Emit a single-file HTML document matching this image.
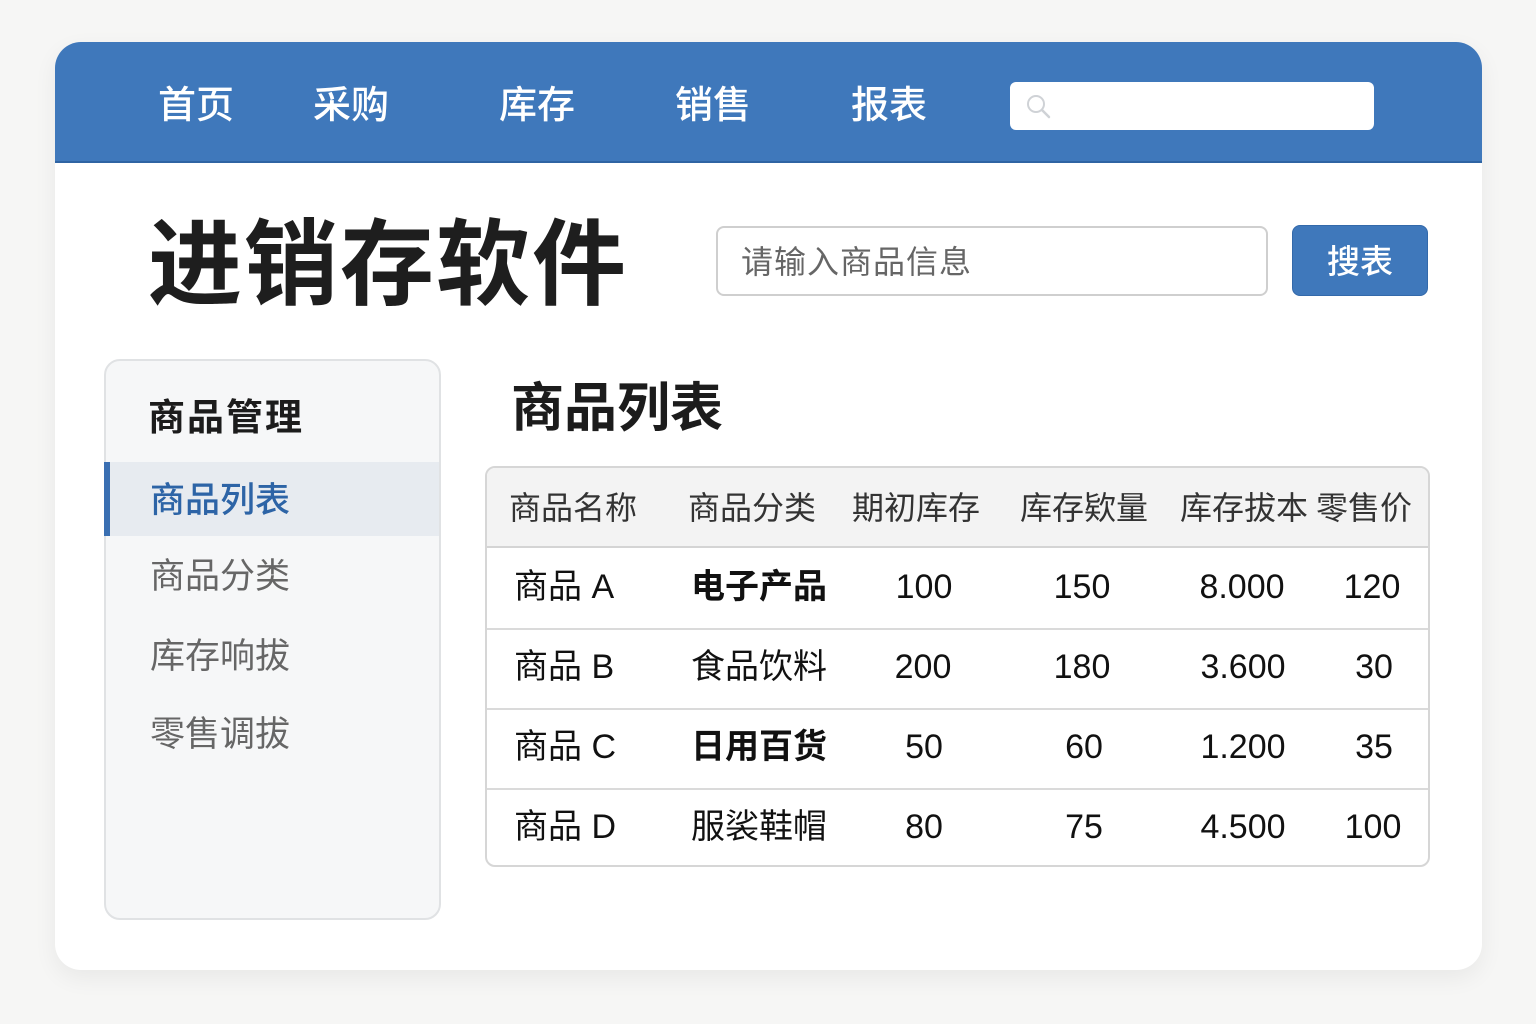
<!DOCTYPE html>
<html><head><meta charset="utf-8">
<style>
*{margin:0;padding:0;box-sizing:border-box}
body{width:1536px;height:1024px;background:#f6f6f5;position:relative;overflow:hidden;font-family:"Liberation Sans","Noto Sans CJK SC",sans-serif;}
.a{position:absolute;white-space:nowrap;line-height:1}
#card{position:absolute;left:55px;top:42px;width:1427px;height:928px;background:#fff;border-radius:26px;box-shadow:0 8px 24px rgba(0,0,0,0.06);overflow:hidden}
#nav{position:absolute;left:0;top:0;width:1427px;height:121px;background:#3f78bb;border-bottom:2px solid #2f64a3}
.nv{color:#fff;font-size:38px;font-weight:500;top:45px}
#ns{position:absolute;left:955px;top:40px;width:364px;height:48px;background:#fff;border-radius:6px}
.sb{position:absolute;background:#f6f7f8;border:2px solid #e0e2e4;border-radius:16px}
.tb{position:absolute;left:430px;top:424px;width:945px;height:401px;border:2px solid #d6d6d6;border-radius:10px;overflow:hidden;background:#fff}
.th{position:absolute;left:0;top:0;width:100%;height:80px;background:#f3f3f3;border-bottom:2px solid #d4d4d4}
.rl{position:absolute;left:0;width:100%;height:2px;background:#dadada}
.h{font-size:32px;color:#333;top:24px}
.d{font-size:34px;color:#111}
.c{transform:translateX(-50%)}
</style></head><body>
<div id="card">
  <div id="nav">
    <div class="a nv" style="left:103px">首页</div>
    <div class="a nv" style="left:258px">采购</div>
    <div class="a nv" style="left:444px">库存</div>
    <div class="a nv" style="left:620px">销售</div>
    <div class="a nv" style="left:796px">报表</div>
    <div id="ns"><svg width="30" height="30" style="position:absolute;left:14px;top:10px" viewBox="0 0 30 30"><circle cx="12" cy="12" r="8" fill="none" stroke="#cfd2d6" stroke-width="2"/><line x1="18" y1="18" x2="25" y2="25" stroke="#cfd2d6" stroke-width="2.5" stroke-linecap="round"/></svg></div>
  </div>
  <div class="a" style="left:93px;top:176px;font-size:94px;font-weight:700;color:#1e1e1e;letter-spacing:2px">进销存软件</div>
  <div style="position:absolute;left:661px;top:184px;width:552px;height:70px;border:2px solid #cfcfcf;border-radius:8px;background:#fff"></div>
  <div class="a" style="left:686px;top:204px;font-size:32px;color:#666;letter-spacing:1px">请输入商品信息</div>
  <div style="position:absolute;left:1237px;top:183px;width:136px;height:71px;background:#3f78bb;border-radius:8px;border:1px solid #3369aa"></div>
  <div class="a" style="left:1272px;top:203px;font-size:33px;color:#fff;font-weight:500">搜表</div>

  <div class="sb" style="left:49px;top:317px;width:337px;height:561px"></div>
  <div class="a" style="left:93px;top:357px;font-size:37px;font-weight:700;color:#1c1c1c;letter-spacing:2px">商品管理</div>
  <div style="position:absolute;left:51px;top:420px;width:333px;height:74px;background:#e7ebf0"></div>
  <div style="position:absolute;left:49px;top:420px;width:6px;height:74px;background:#3a6fb2"></div>
  <div class="a" style="left:95px;top:441px;font-size:35px;color:#2d64a6;font-weight:500">商品列表</div>
  <div class="a" style="left:95px;top:517px;font-size:35px;color:#666">商品分类</div>
  <div class="a" style="left:95px;top:597px;font-size:35px;color:#666">库存响拔</div>
  <div class="a" style="left:95px;top:675px;font-size:35px;color:#666">零售调拔</div>

  <div class="a" style="left:456px;top:340px;font-size:53px;font-weight:700;color:#1c1c1c">商品列表</div>

  <div class="tb">
    <div class="th"></div>
    <div class="a h" style="left:22px">商品名称</div>
    <div class="a h" style="left:201px">商品分类</div>
    <div class="a h" style="left:365px">期初库存</div>
    <div class="a h" style="left:533px">库存欵量</div>
    <div class="a h" style="left:693px">库存拔本</div>
    <div class="a h" style="left:829px">零售价</div>
    <div class="rl" style="top:160px"></div>
    <div class="rl" style="top:240px"></div>
    <div class="rl" style="top:320px"></div>

    <div class="a d" style="left:27px;top:102px">商品 A</div>
    <div class="a d" style="left:204px;top:102px;font-weight:600">电子产品</div>
    <div class="a d c" style="left:437px;top:102px">100</div>
    <div class="a d c" style="left:595px;top:102px">150</div>
    <div class="a d c" style="left:755px;top:102px">8.000</div>
    <div class="a d c" style="left:885px;top:102px">120</div>

    <div class="a d" style="left:27px;top:182px">商品 B</div>
    <div class="a d" style="left:204px;top:182px">食品饮料</div>
    <div class="a d c" style="left:436px;top:182px">200</div>
    <div class="a d c" style="left:595px;top:182px">180</div>
    <div class="a d c" style="left:756px;top:182px">3.600</div>
    <div class="a d c" style="left:887px;top:182px">30</div>

    <div class="a d" style="left:27px;top:262px">商品 C</div>
    <div class="a d" style="left:204px;top:262px;font-weight:600">日用百货</div>
    <div class="a d c" style="left:437px;top:262px">50</div>
    <div class="a d c" style="left:597px;top:262px">60</div>
    <div class="a d c" style="left:756px;top:262px">1.200</div>
    <div class="a d c" style="left:887px;top:262px">35</div>

    <div class="a d" style="left:27px;top:342px">商品 D</div>
    <div class="a d" style="left:204px;top:342px">服裟鞋帽</div>
    <div class="a d c" style="left:437px;top:342px">80</div>
    <div class="a d c" style="left:597px;top:342px">75</div>
    <div class="a d c" style="left:756px;top:342px">4.500</div>
    <div class="a d c" style="left:886px;top:342px">100</div>
  </div>
</div>
</body></html>
